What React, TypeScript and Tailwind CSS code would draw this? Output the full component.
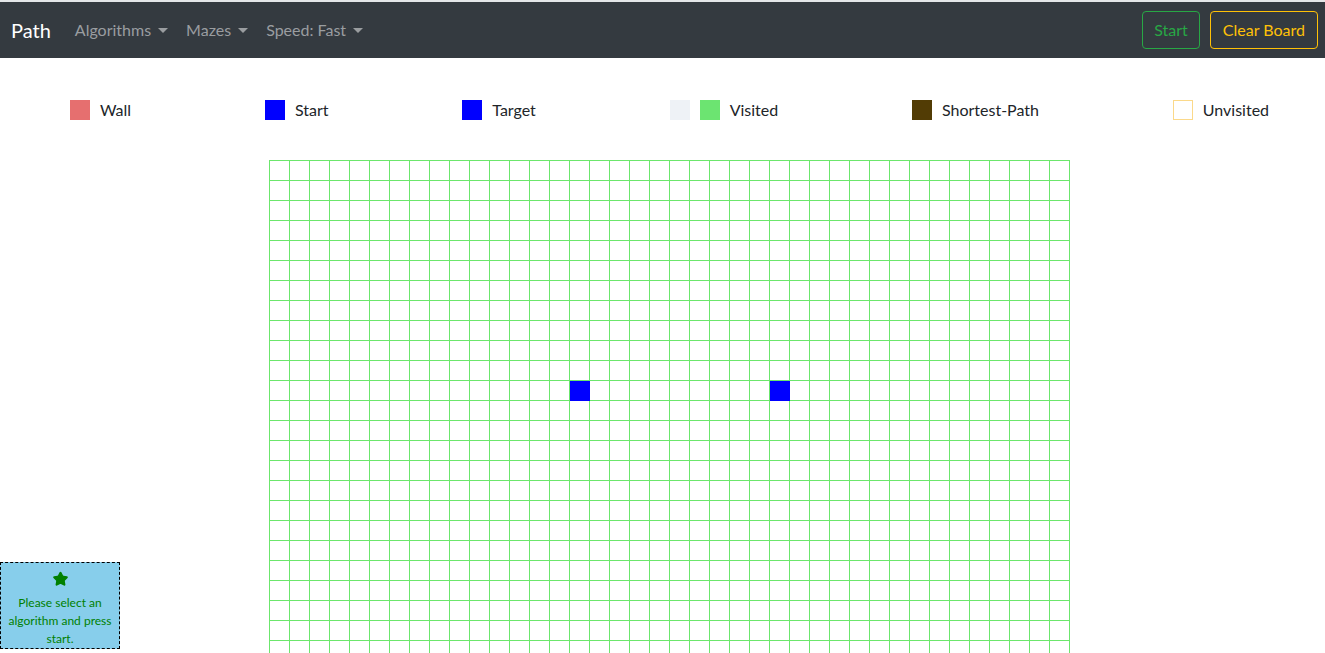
import { Star } from "lucide-react";

const ROWS = 26;
const COLS = 40;
const START = { row: 11, col: 15 };
const TARGET = { row: 11, col: 25 };

const legend = [
  { label: "Wall", swatches: ["bg-[#e66f6f]"] },
  { label: "Start", swatches: ["bg-[#0000ff]"] },
  { label: "Target", swatches: ["bg-[#0000ff]"] },
  { label: "Visited", swatches: ["bg-[#eef2f6]", "bg-[#6ce471]"] },
  { label: "Shortest-Path", swatches: ["bg-[#523c05]"] },
  { label: "Unvisited", swatches: ["bg-white border border-[#fbd98a]"] },
];

function NavDropdown({ label }: { label: string }) {
  return (
    <a className="flex items-center px-[9px] text-[16px] text-[#9a9da0] cursor-pointer">
      {label}
      <span className="ml-[7px] mt-[1px] w-0 h-0 border-t-[5px] border-t-[#9a9da0] border-x-[5px] border-x-transparent" />
    </a>
  );
}

export default function App() {
  return (
    <div className="min-h-screen overflow-x-hidden bg-white font-['Lato','Noto_Sans',sans-serif] text-[#212529]">
      <div className="h-[2px] bg-[#e4e6e8]" />
      {/* Navbar */}
      <nav className="h-[56px] bg-[#343a40] flex items-center justify-between pl-[11px] pr-[7px]">
        <div className="flex items-center">
          <span className="text-[20px] text-white mr-[15px]">Path</span>
          <NavDropdown label="Algorithms" />
          <NavDropdown label="Mazes" />
          <NavDropdown label="Speed: Fast" />
        </div>
        <div className="flex items-center gap-[10px]">
          <button className="h-[38px] px-[11px] rounded-[4px] border border-[#28a745] text-[#28a745] text-[16px]">
            Start
          </button>
          <button className="h-[38px] px-[12px] rounded-[4px] border border-[#ffc107] text-[#ffc107] text-[16px]">
            Clear Board
          </button>
        </div>
      </nav>

      {/* Legend */}
      <ul className="flex justify-around items-center w-[1333px] ml-[3px] pt-[40px] pb-[38px]">
        {legend.map((item) => (
          <li key={item.label} className="flex items-center text-[16px]">
            {item.swatches.map((s, i) => (
              <span key={i} className={`w-[20px] h-[20px] mr-[10px] ${s}`} />
            ))}
            <span>{item.label}</span>
          </li>
        ))}
      </ul>

      {/* Grid */}
      <div className="flex justify-center pl-[14px]">
        <div className="border-l border-t border-[#6ce66c]">
          {Array.from({ length: ROWS }).map((_, r) => (
            <div key={r} className="flex">
              {Array.from({ length: COLS }).map((_, c) => {
                const blue =
                  (r === START.row && c === START.col) ||
                  (r === TARGET.row && c === TARGET.col);
                return (
                  <div
                    key={c}
                    className={
                      blue
                        ? "w-[20px] h-[20px] border-r border-b border-[#0000ff] bg-[#0000ff]"
                        : "w-[20px] h-[20px] border-r border-b border-[#6ce66c]"
                    }
                  />
                );
              })}
            </div>
          ))}
        </div>
      </div>

      {/* Status box */}
      <div className="fixed left-0 bottom-[4px] w-[120px] h-[87px] bg-[#87ceeb] border border-dashed border-black flex flex-col items-center pt-[8px] text-[12px] leading-[18px] text-[#008000] text-center">
        <Star size={17} className="fill-[#008000] text-[#008000] mb-[7px]" />
        <p className="px-[4px]">Please select an algorithm and press start.</p>
      </div>
    </div>
  );
}
